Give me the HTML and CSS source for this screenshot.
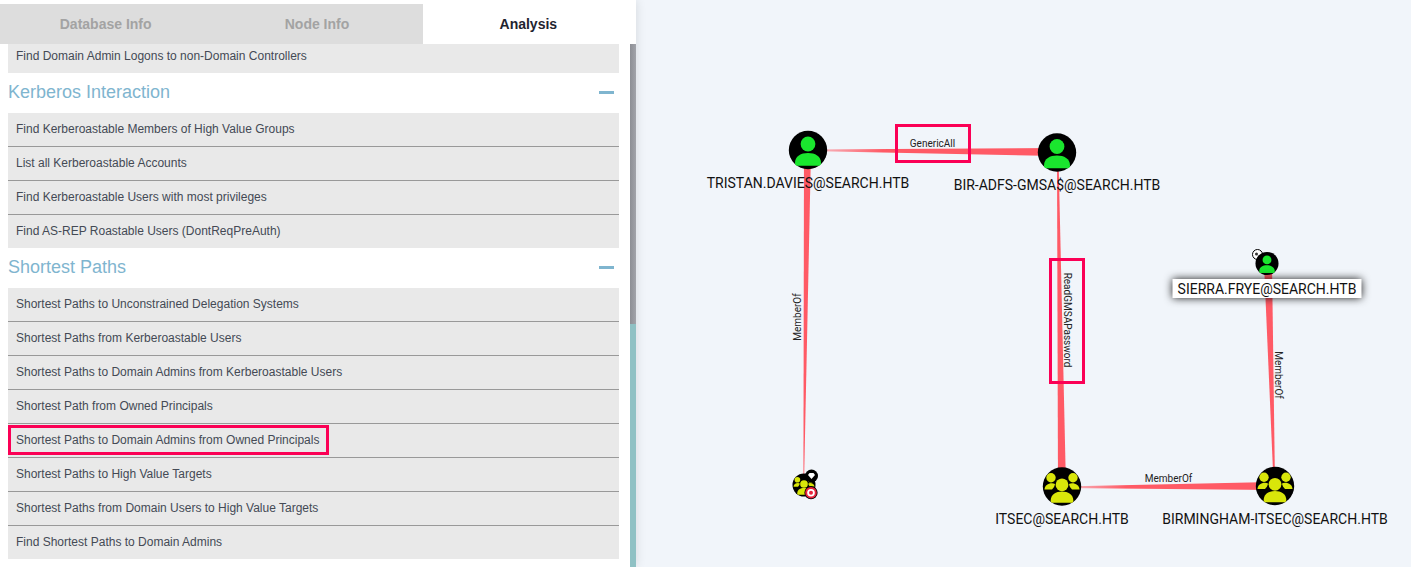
FILE: index.html
```html
<!DOCTYPE html>
<html lang="en">
<head>
  <meta charset="UTF-8" />
  <title>BloodHound</title>
  <link rel="stylesheet" href="styles.css">
</head>
<body>

  <div class="panel">
    <div class="tabs">
      <div class="tab">Database Info</div>
      <div class="tab">Node Info</div>
      <div class="tab active">Analysis</div>
    </div>
    <div class="content">
      <div class="list">
        <div class="list-item first">Find Domain Admin Logons to non-Domain Controllers</div>

        <div class="section-head"><span>Kerberos Interaction</span><i class="minus"></i></div>
        <div class="list-item">Find Kerberoastable Members of High Value Groups</div>
        <div class="list-item">List all Kerberoastable Accounts</div>
        <div class="list-item">Find Kerberoastable Users with most privileges</div>
        <div class="list-item last">Find AS-REP Roastable Users (DontReqPreAuth)</div>

        <div class="section-head"><span>Shortest Paths</span><i class="minus"></i></div>
        <div class="list-item">Shortest Paths to Unconstrained Delegation Systems</div>
        <div class="list-item">Shortest Paths from Kerberoastable Users</div>
        <div class="list-item">Shortest Paths to Domain Admins from Kerberoastable Users</div>
        <div class="list-item">Shortest Path from Owned Principals</div>
        <div class="list-item">Shortest Paths to Domain Admins from Owned Principals<b class="mark"></b></div>
        <div class="list-item">Shortest Paths to High Value Targets</div>
        <div class="list-item">Shortest Paths from Domain Users to High Value Targets</div>
        <div class="list-item last">Find Shortest Paths to Domain Admins</div>
      </div>
      <div class="scrollbar"><div class="thumb"></div></div>
    </div>
  </div>

  <div class="graph">
    <svg class="graph-svg" width="775" height="567" viewBox="636 0 775 567">
      <defs>
        <linearGradient id="fadeRight" x1="0" x2="1" y1="0" y2="0">
          <stop offset="0" stop-color="#ff5a65" stop-opacity="0.3"/>
          <stop offset="0.3" stop-color="#ff5a65"/>
        </linearGradient>
        <symbol id="user" viewBox="-20 -20 40 40">
          <circle r="19.2" fill="#000"/>
          <circle cx="0" cy="-6" r="7.4" fill="#1ae62e"/>
          <path d="M-13 13 C-13 6 -7 3 0 3 C7 3 13 6 13 13 C13 15 12 15.7 11 15.7 L-11 15.7 C-12 15.7 -13 15 -13 13 Z" fill="#1ae62e"/>
        </symbol>
        <symbol id="group" viewBox="-20 -20 40 40">
          <circle r="19.2" fill="#000"/>
          <circle cx="-11" cy="-8.7" r="4.7" fill="#d9e60a"/>
          <circle cx="11" cy="-8.7" r="4.7" fill="#d9e60a"/>
          <path d="M-17.5 3 C-17.5 -1 -14 -3.3 -10 -3.3 C-9 -3.3 -8 -3 -7 -2.5 C-7.5 0 -8.5 1.5 -10 3 Z" fill="#d9e60a"/>
          <path d="M17.5 3 C17.5 -1 14 -3.3 10 -3.3 C9 -3.3 8 -3 7 -2.5 C7.5 0 8.5 1.5 10 3 Z" fill="#d9e60a"/>
          <circle cx="0" cy="-1.7" r="6.4" fill="#d9e60a"/>
          <path d="M-11.3 14 C-11.3 8 -6 5 0 5 C6 5 11.3 8 11.3 14 C11.3 15.5 10.5 16.3 9 16.3 L-9 16.3 C-10.5 16.3 -11.3 15.5 -11.3 14 Z" fill="#d9e60a"/>
        </symbol>
      </defs>

      <!-- edges -->
      <polygon points="808,149.5 1057,148 1057,156 808,151" fill="url(#fadeRight)"/>
      <polygon class="edge" points="804,150 811,150 804,484 803.4,484"/>
      <polygon class="edge" points="1057,152 1058.4,152 1066,487 1058,487"/>
      <polygon class="edge" points="1264,264 1272,264 1275,485 1273.6,485"/>
      <polygon points="1062,486.5 1275,482 1275,490 1062,488" fill="url(#fadeRight)"/>

      <!-- edge labels -->
      <text class="edge-label" x="932.5" y="147" text-anchor="middle">GenericAll</text>
      <text class="edge-label" x="1168.5" y="482" text-anchor="middle">MemberOf</text>
      <text class="edge-label" transform="translate(801,317) rotate(-90)" text-anchor="middle">MemberOf</text>
      <text class="edge-label" transform="translate(1064,320) rotate(90)" text-anchor="middle">ReadGMSAPassword</text>
      <text class="edge-label" transform="translate(1275,375) rotate(90)" text-anchor="middle">MemberOf</text>

      <!-- red annotation boxes -->
      <rect class="annot" x="896.5" y="125.5" width="73" height="36"/>
      <rect class="annot" x="1050.5" y="259.5" width="33" height="123"/>

      <!-- nodes -->
      <circle cx="1257.5" cy="254.5" r="5" fill="#fff" stroke="#000" stroke-width="1"/>
      <circle cx="1256.5" cy="254" r="1.5" fill="#333"/>
      <use href="#user" x="788" y="130" width="40" height="40"/>
      <use href="#user" x="1037" y="132.5" width="40" height="40"/>
      <use href="#user" x="1255" y="251.5" width="24" height="24"/>
      <use href="#group" x="1042" y="466.5" width="40" height="40"/>
      <use href="#group" x="1255" y="466" width="40" height="40"/>
      <use href="#group" x="792" y="473" width="24" height="24"/>

      <!-- small badges -->
      <circle cx="811.5" cy="476" r="6.5" fill="#000"/>
      <path d="M808 475 L809.5 473 L813.5 473 L815 475 L811.5 479 Z" fill="#fff"/>
      <circle cx="811" cy="492.7" r="6.6" fill="#000"/>
      <circle cx="811" cy="492.7" r="5.8" fill="#e8243c"/>
      <circle cx="811" cy="492.7" r="3.8" fill="#fff"/>
      <circle cx="811" cy="492.7" r="2" fill="#e8243c"/>

      <!-- node labels -->
      <text class="node-label" x="808" y="188" text-anchor="middle">TRISTAN.DAVIES@SEARCH.HTB</text>
      <text class="node-label" x="1057" y="190" text-anchor="middle">BIR-ADFS-GMSA$@SEARCH.HTB</text>
      <text class="node-label" x="1062" y="524" text-anchor="middle">ITSEC@SEARCH.HTB</text>
      <text class="node-label" x="1275" y="524" text-anchor="middle">BIRMINGHAM-ITSEC@SEARCH.HTB</text>
      <rect class="label-bg" x="1172.5" y="279" width="189" height="19"/>
      <text class="node-label" x="1267" y="294" text-anchor="middle">SIERRA.FRYE@SEARCH.HTB</text>
    </svg>
  </div>

</body>
</html>
```

FILE: styles.css
```css
html, body {
  margin: 0;
  height: 100%;
  overflow: hidden;
}
body {
  display: flex;
  background: #f1f5fa;
  font-family: "Liberation Sans", Arial, sans-serif;
}
.panel {
  width: 636px;
  height: 567px;
  flex: none;
  display: flex;
  flex-direction: column;
  padding-top: 4px;
  box-sizing: border-box;
  background: white;
  box-shadow: 0 0 10px rgba(0,0,0,0.12);
}
.tabs {
  display: flex;
  height: 40px;
  flex: none;
  padding-right: 2px;
}
.tab {
  flex: 1;
  display: flex;
  align-items: center;
  justify-content: center;
  background: #dddddd;
  color: #a3a3a3;
  font-size: 14px;
  font-weight: bold;
}
.tab.active {
  background: white;
  color: #1f2430;
}
.content {
  flex: 1;
  display: flex;
  min-height: 0;
}
.list {
  flex: 1;
  padding: 0 11px 0 8px;
  overflow: hidden;
}
.scrollbar {
  width: 6px;
  flex: none;
  background: #8fc1c4;
}
.thumb {
  height: 280px;
  background: linear-gradient(to right, #8d8f95, #a2a4aa);
}
.list-item {
  position: relative;
  height: 34px;
  box-sizing: border-box;
  padding: 8px 8px 0;
  background: #e9e9e9;
  border-bottom: 1px solid #999;
  color: #444a55;
  font-size: 12px;
  line-height: 16px;
}
.list-item.last {
  height: 33px;
  border-bottom: 0;
}
.list-item.first {
  height: 29px;
  padding-top: 4px;
  border-bottom: 0;
}
.section-head {
  height: 40px;
  box-sizing: border-box;
  padding-bottom: 2px;
  display: flex;
  align-items: center;
  justify-content: space-between;
  color: #7fb5cf;
  font-size: 18px;
}
.minus {
  width: 15px;
  height: 3px;
  margin-right: 5px;
  background: #7fb5cf;
}
.mark {
  position: absolute;
  left: 0;
  top: 1px;
  width: 321px;
  height: 30px;
  box-sizing: border-box;
  border: 3px solid #fb0055;
}
.graph {
  flex: 1;
  min-width: 0;
}
.graph-svg {
  display: block;
}
.edge {
  fill: #ff5a65;
}
.edge-label {
  font-family: Roboto, sans-serif;
  font-size: 10px;
  fill: #222;
}
.node-label {
  font-family: Roboto, sans-serif;
  font-size: 14px;
  fill: #111;
}
.label-bg {
  fill: white;
  filter: drop-shadow(0 0 4px rgba(0,0,0,0.9));
}
.annot {
  fill: none;
  stroke: #fb0055;
  stroke-width: 3;
}
```
